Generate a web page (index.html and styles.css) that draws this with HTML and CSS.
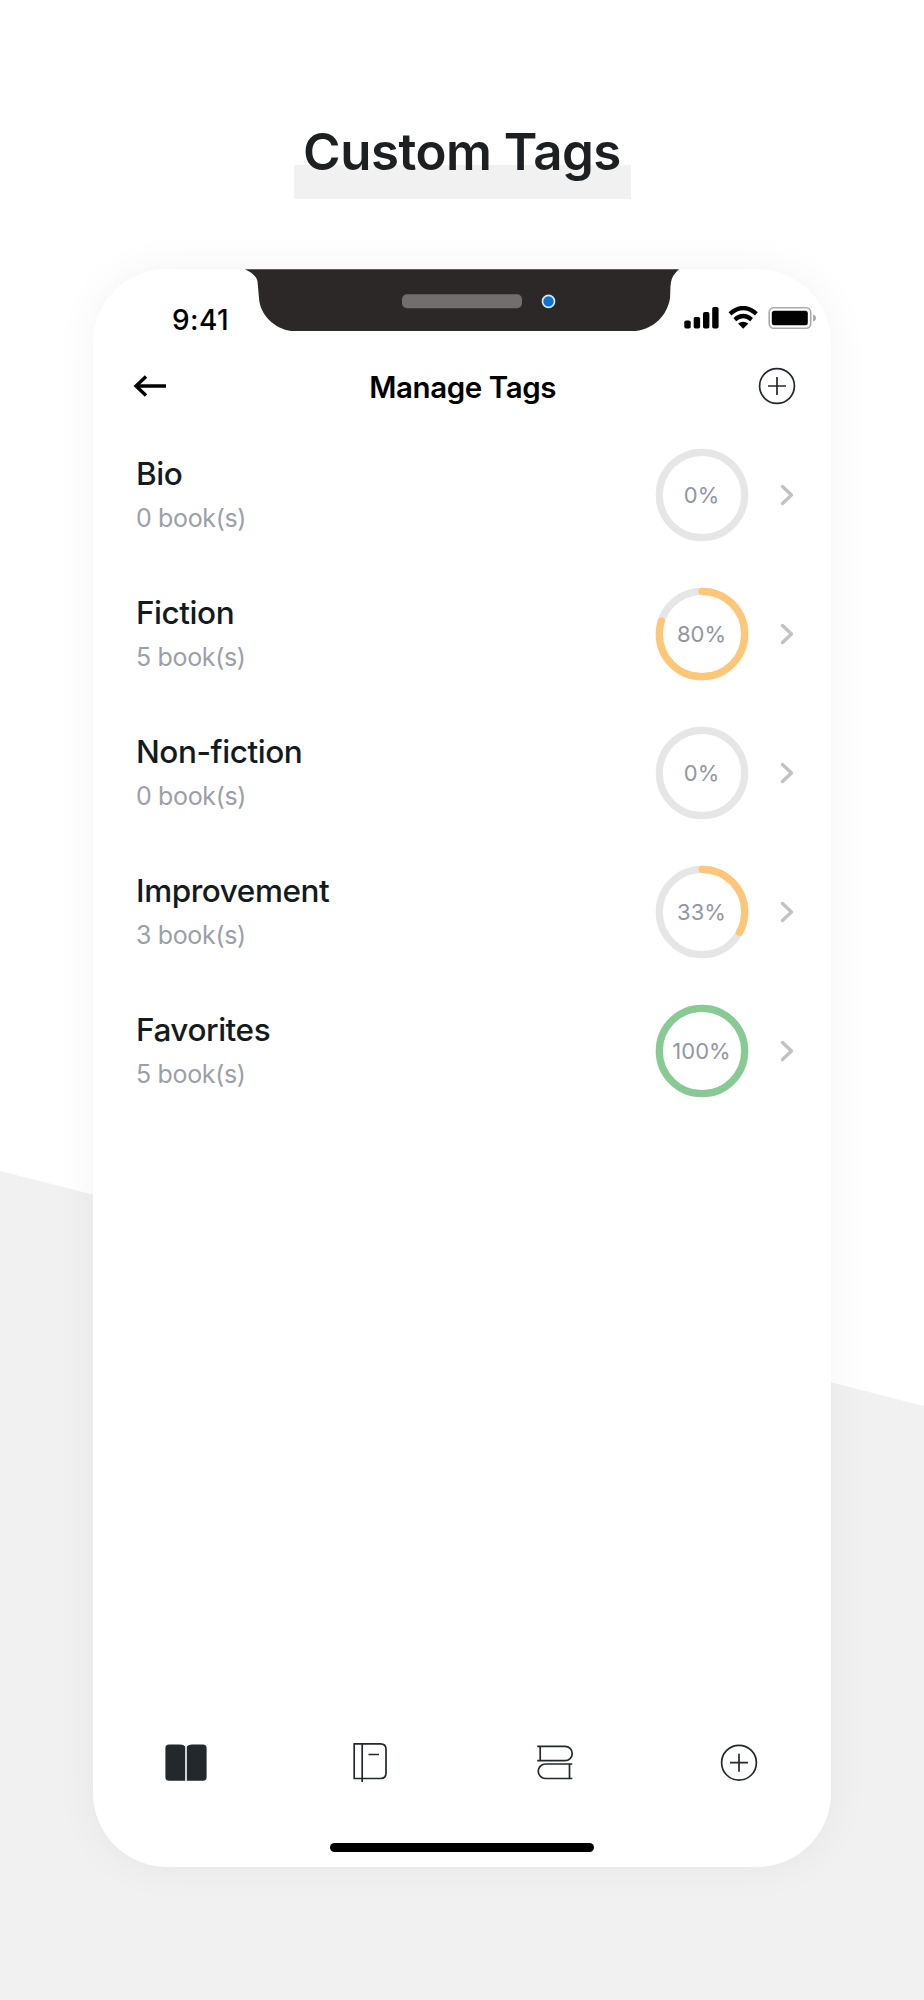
FILE: index.html
```html
<!DOCTYPE html>
<html lang="en">
<head>
<meta charset="utf-8">
<title>Custom Tags</title>
<link rel="stylesheet" href="styles.css">
</head>
<body>
<main class="page">
  <h1 class="title"><span class="title-text">Custom Tags</span></h1>
  <section class="phone">
    <svg class="notch" viewBox="0 0 434 62" width="434" height="62.500">
      <path d="M0 0H434Q427 6 426 13C425 18 425.500 24 425 29C422 48 406 62 386 62H51C31 62 15 46 14 29L12.500 12Q11 5 0 0Z" fill="#2c2828"/>
      <rect x="157" y="25" width="120" height="14" rx="5" fill="#706e6f"/>
      <circle cx="303.500" cy="32.200" r="6" fill="#0a72d4" stroke="#dce6ee" stroke-width="1.700"/>
    </svg>
    <div class="status">
      <span class="clock">9:41</span>
      <svg class="status-icons" viewBox="0 0 134 24" width="134" height="24">
        <rect x="0.300" y="14.500" width="6.400" height="8" rx="1.800"/>
        <rect x="9.700" y="11" width="6.400" height="11.500" rx="1.800"/>
        <rect x="19" y="6" width="6.400" height="16.500" rx="1.800"/>
        <rect x="28.200" y="1" width="6.400" height="21.500" rx="1.800"/>
        <g fill="none" stroke="#000" stroke-width="4.200">
          <path d="M46 7.800Q59.200-3.800 72.400 7.800"/>
          <path d="M50.800 13.600Q59.200 6.400 67.600 13.600"/>
        </g>
        <path d="M54 17.600Q59.200 13.800 64.400 17.600L59.200 22.800Z"/>
        <rect x="85.200" y="1.700" width="41.500" height="20.600" rx="4.500" fill="none" stroke="#aaa" stroke-width="1.600"/>
        <rect x="87.800" y="4.700" width="36" height="14.600" rx="2.500"/>
        <path d="M129 8.500Q132 9.500 132 12T129 15.500Z" fill="#aaa"/>
      </svg>
    </div>
    <header class="header">
      <svg class="back" viewBox="0 0 34 24" width="34" height="24"><path d="M33 12H3M13 2.500L3 12L13 21.500" fill="none" stroke="#000" stroke-width="3.400"/></svg>
      <h2 class="heading">Manage Tags</h2>
      <svg class="add" viewBox="0 0 38 38" width="38" height="38"><path d="M10 19H28M19 10V28"/><circle cx="19" cy="19" r="17.400"/></svg>
    </header>
    <ul class="tags">
      <li class="tag">
        <div class="info"><span class="name">Bio</span><span class="count">0 book(s)</span></div>
        <div class="ring"><svg viewBox="0 0 94 94" width="94" height="94"><circle class="track" cx="47" cy="47" r="42.700"/></svg><span class="percent">0%</span></div>
        <svg class="chevron" viewBox="0 0 14 22" width="14" height="22"><path d="M2.500 2.500L11.500 11L2.500 19.500"/></svg>
      </li>
      <li class="tag">
        <div class="info"><span class="name">Fiction</span><span class="count">5 book(s)</span></div>
        <div class="ring"><svg viewBox="0 0 94 94" width="94" height="94"><circle class="track" cx="47" cy="47" r="42.700"/><circle class="value" cx="47" cy="47" r="42.700" pathLength="100" stroke-dasharray="80 100"/></svg><span class="percent">80%</span></div>
        <svg class="chevron" viewBox="0 0 14 22" width="14" height="22"><path d="M2.500 2.500L11.500 11L2.500 19.500"/></svg>
      </li>
      <li class="tag">
        <div class="info"><span class="name">Non-fiction</span><span class="count">0 book(s)</span></div>
        <div class="ring"><svg viewBox="0 0 94 94" width="94" height="94"><circle class="track" cx="47" cy="47" r="42.700"/></svg><span class="percent">0%</span></div>
        <svg class="chevron" viewBox="0 0 14 22" width="14" height="22"><path d="M2.500 2.500L11.500 11L2.500 19.500"/></svg>
      </li>
      <li class="tag">
        <div class="info"><span class="name">Improvement</span><span class="count">3 book(s)</span></div>
        <div class="ring"><svg viewBox="0 0 94 94" width="94" height="94"><circle class="track" cx="47" cy="47" r="42.700"/><circle class="value" cx="47" cy="47" r="42.700" pathLength="100" stroke-dasharray="33 100"/></svg><span class="percent">33%</span></div>
        <svg class="chevron" viewBox="0 0 14 22" width="14" height="22"><path d="M2.500 2.500L11.500 11L2.500 19.500"/></svg>
      </li>
      <li class="tag">
        <div class="info"><span class="name">Favorites</span><span class="count">5 book(s)</span></div>
        <div class="ring"><svg viewBox="0 0 94 94" width="94" height="94"><circle class="value complete" cx="47" cy="47" r="42.700"/></svg><span class="percent">100%</span></div>
        <svg class="chevron" viewBox="0 0 14 22" width="14" height="22"><path d="M2.500 2.500L11.500 11L2.500 19.500"/></svg>
      </li>
    </ul>
    <nav class="tabs">
      <svg viewBox="0 0 42 42" width="42" height="42" fill="#22282b">
        <path d="M4 2.500H15Q18.500 2.500 20.200 4.500V38.800H4Q.4 38.800 .4 35.200V6Q.4 2.500 4 2.500Z"/>
        <path d="M38 2.500H27Q23.500 2.500 21.800 4.500V38.800H38Q41.600 38.800 41.600 35.200V6Q41.600 2.500 38 2.500Z"/>
      </svg>
      <svg class="line" viewBox="0 0 42 42" width="42" height="42"><path d="M5.200 1.900H31.500Q37 1.900 37 7.400V31Q37 36.500 31.500 36.500H5.200ZM13.200 1V40M19.500 12.500H30"/></svg>
      <svg class="line" viewBox="0 0 42 42" width="42" height="42"><path d="M3.200 4.300H31A7.100 7.100 0 0 1 31 18.700H3.200M6.200 4.300V18.700M38.300 22H11.500A7.200 7.200 0 0 0 11.500 36.500H38.300M35.500 22V36.500"/></svg>
      <svg class="line" viewBox="0 0 42 42" width="42" height="42"><circle cx="21" cy="20.700" r="17.400"/><path d="M12 20.700H30M21 11.700V29.700"/></svg>
    </nav>
    <div class="home"></div>
  </section>
</main>
</body>
</html>
```
FILE: styles.css
```css
* { box-sizing: border-box; }
body { margin: 0; font-family: Inter, "Liberation Sans", sans-serif; }
svg { display: block; flex: none; }
.page {
  display: flex;
  flex-direction: column;
  align-items: center;
  width: 924px;
  height: 2000px;
  overflow: hidden;
  background: #fff;
  position: relative;
  isolation: isolate;
}
.page::before {
  content: "";
  position: absolute;
  inset: 0;
  z-index: -1;
  background: #f1f1f1;
  clip-path: polygon(0 1171px, 924px 1406px, 924px 2000px, 0 2000px);
}
.title {
  width: 337px;
  height: 84px;
  margin: 115px 0 0;
  background: linear-gradient(#f1f1f1, #f1f1f1) 0 50px / 337px 34px no-repeat;
  text-align: center;
  font-size: 51px;
  font-weight: 600;
  line-height: 74px;
  letter-spacing: -.5px;
  color: #1d2022;
  white-space: nowrap;
}
.phone {
  position: relative;
  display: flex;
  flex-direction: column;
  width: 738px;
  height: 1598px;
  margin-top: 69.700px;
  border-radius: 74px;
  background: #fff;
  box-shadow: 0 0 44px rgba(0, 0, 0, .05);
}
.notch { position: absolute; left: 151.500px; top: 0; }
.status {
  display: flex;
  justify-content: space-between;
  align-items: center;
  height: 80px;
  padding: 19px 13px 0 79px;
}
.clock { font-size: 28px; font-weight: 500; line-height: 32px; padding-top: 3px; letter-spacing: .4px; }
.header {
  display: flex;
  align-items: center;
  justify-content: space-between;
  height: 74px;
  padding: 0 34.700px 0 40px;
}
.heading { margin: 0; font-size: 29.500px; font-weight: 600; line-height: 38px; padding-top: 2px; letter-spacing: -.4px; white-space: nowrap; }
.add, .line { fill: none; stroke: #22282b; stroke-width: 1.700; }
.tags { list-style: none; margin: 0; padding: 2.700px 0 0; }
.tag {
  display: flex;
  align-items: center;
  height: 139px;
  padding: 0 37px 0 43px;
}
.info { display: flex; flex-direction: column; flex: 1; gap: 4px; white-space: nowrap; }
.name { font-size: 31.500px; font-weight: 500; line-height: 42px; letter-spacing: -.45px; color: #151b1d; }
.count { font-size: 25px; line-height: 38px; letter-spacing: -.35px; color: #9b9fa7; }
.ring { display: grid; place-items: center; margin-right: 31.500px; }
.ring > * { grid-area: 1 / 1; }
.percent { font-size: 22px; line-height: 28px; color: #9296a0; }
.track, .value { fill: none; stroke: #e6e6e6; stroke-width: 7.200; }
.value { stroke: #fec677; stroke-linecap: round; transform: rotate(-90deg); transform-origin: 50% 50%; }
.complete { stroke: #88c994; }
.chevron { fill: none; stroke: #c2c2c2; stroke-width: 3.400; stroke-linecap: round; stroke-linejoin: round; }
.tabs { display: flex; justify-content: space-between; margin-top: auto; padding: 0 71px 0 72px; }
.home { width: 264px; height: 9px; margin: 59px auto 15px; border-radius: 5px; background: #000; }
```
